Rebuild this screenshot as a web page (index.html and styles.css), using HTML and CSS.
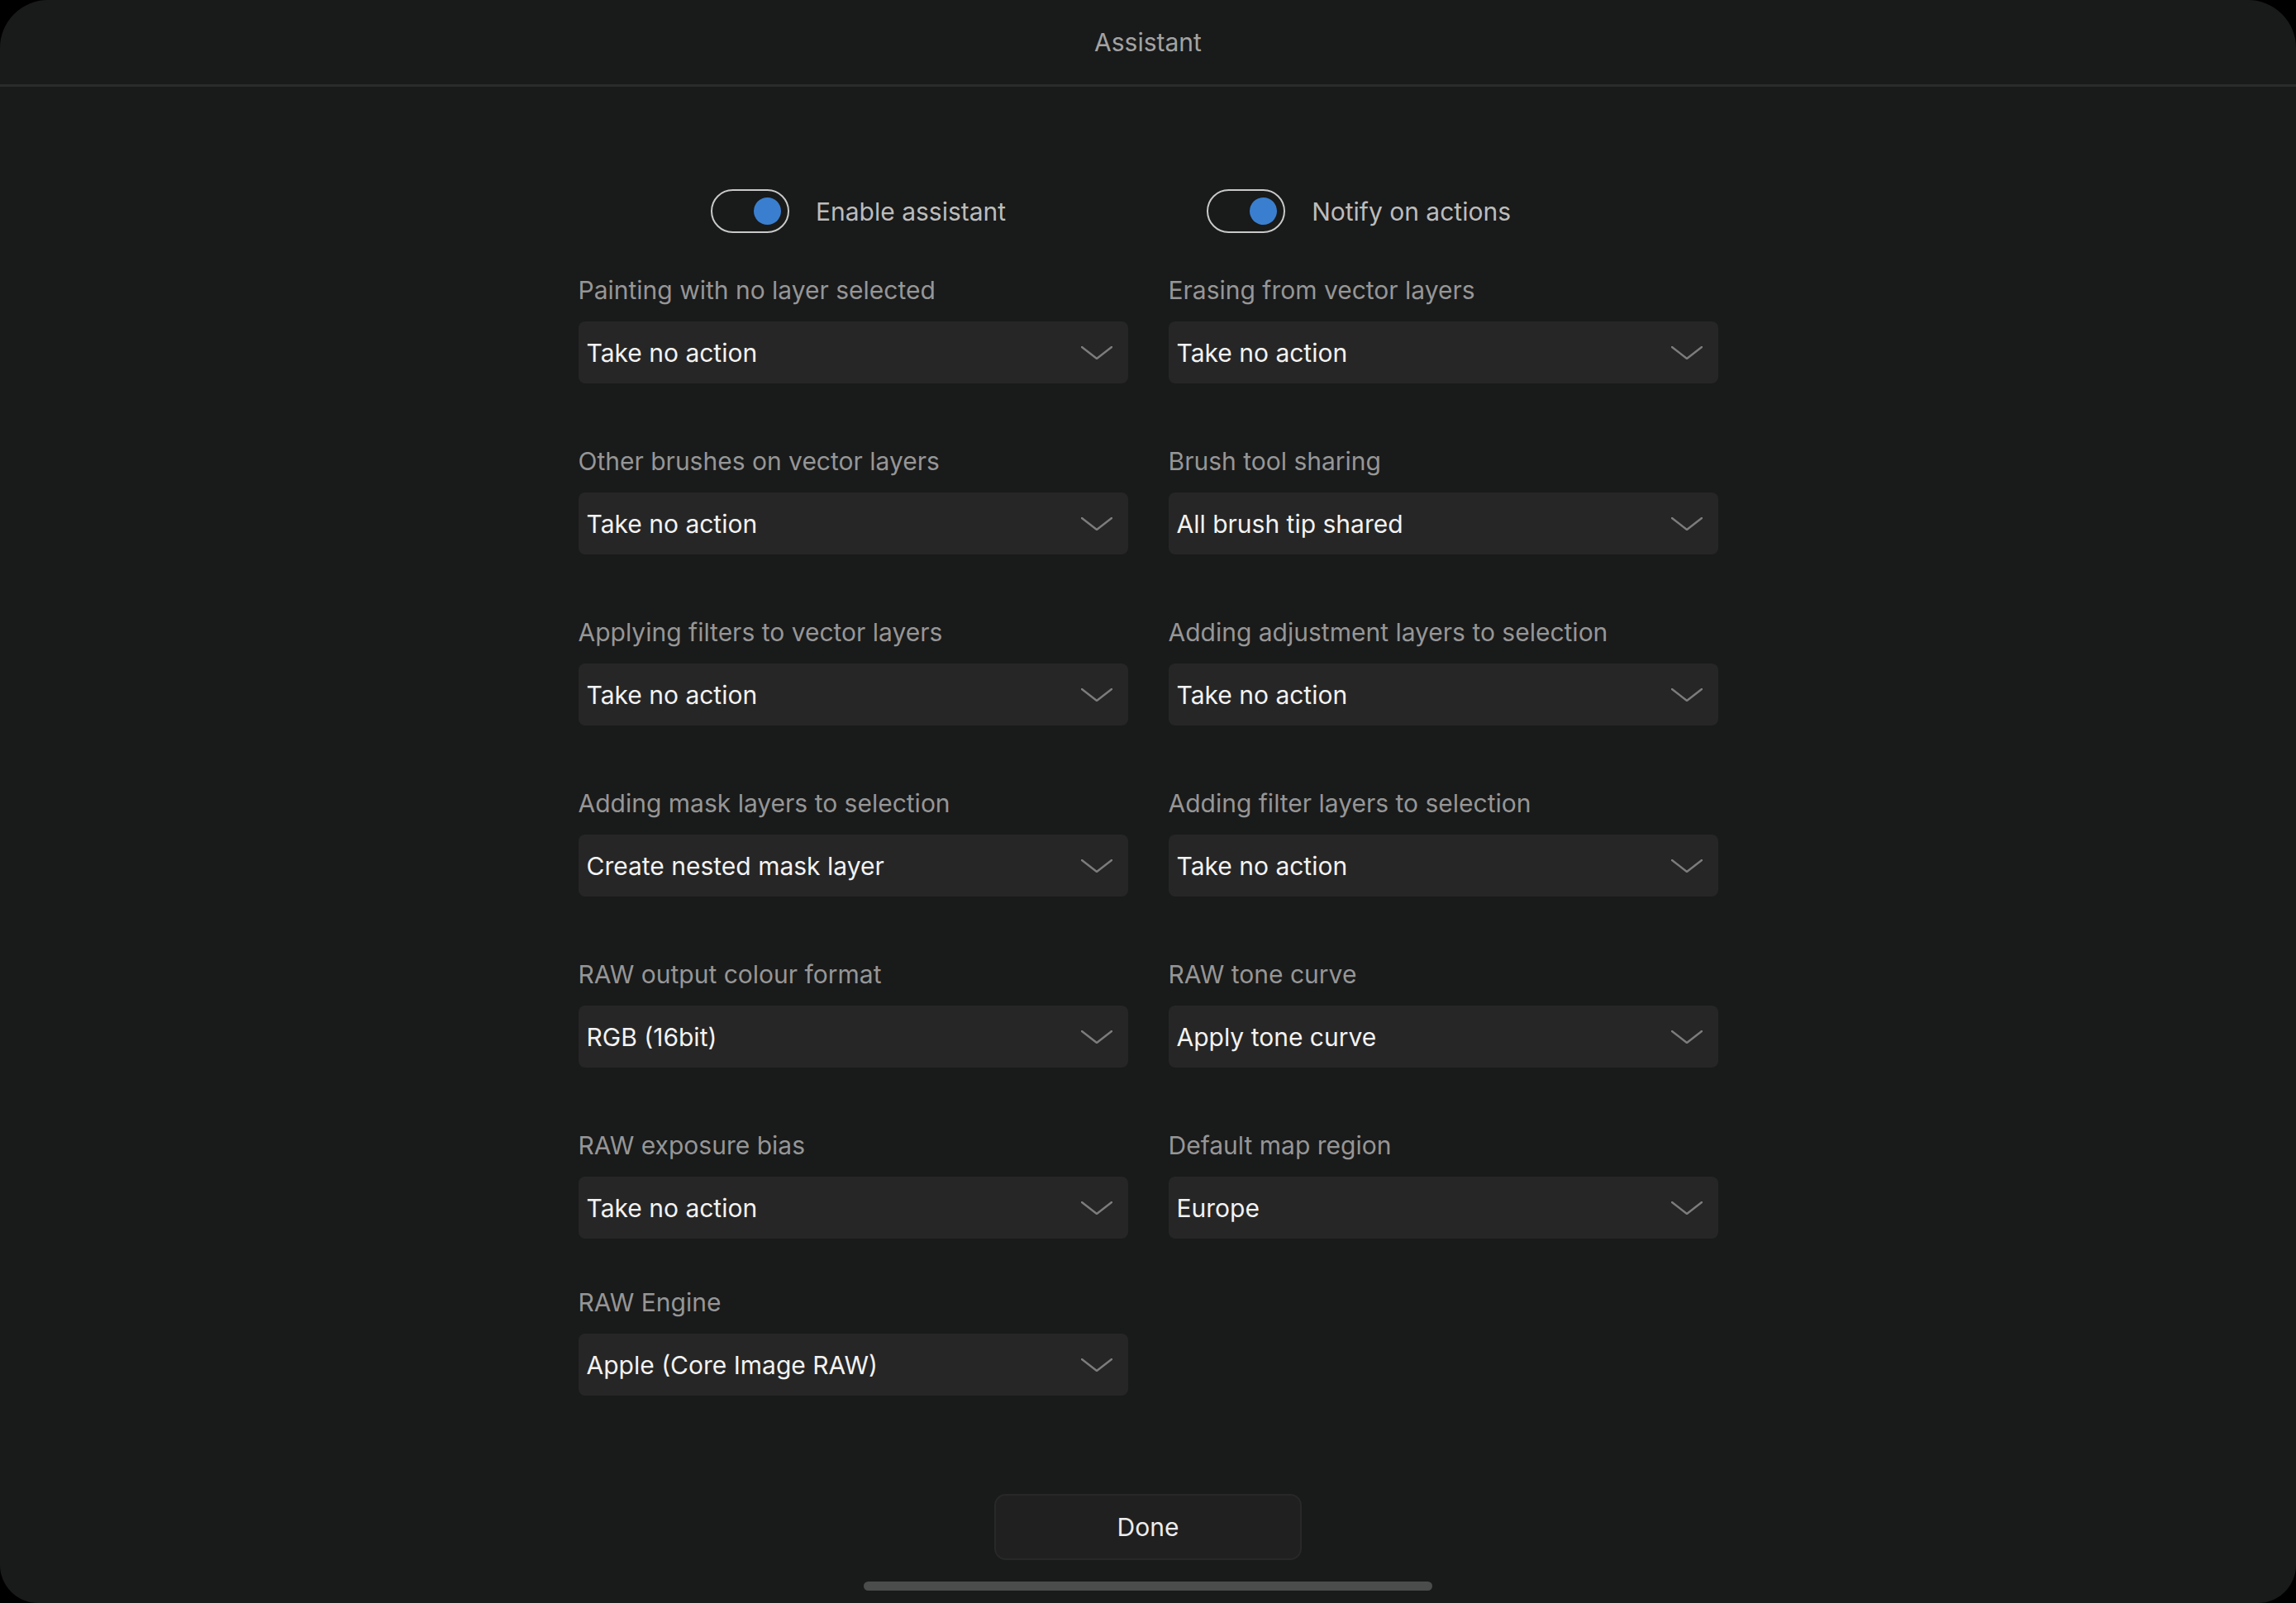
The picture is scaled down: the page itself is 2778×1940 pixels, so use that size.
FILE: index.html
```html
<!DOCTYPE html>
<html lang="en">
<head>
<meta charset="utf-8">
<title>Assistant</title>
<link rel="stylesheet" href="styles.css">
</head>
<body>
<div class="screen">
  <header class="header"><h1 class="title">Assistant</h1></header>
  <main class="content">
    <div class="toggles">
      <label class="toggle-item">
        <span class="switch"><span class="knob"></span></span>
        <span class="toggle-text">Enable assistant</span>
      </label>
      <label class="toggle-item">
        <span class="switch"><span class="knob"></span></span>
        <span class="toggle-text">Notify on actions</span>
      </label>
    </div>
    <div class="fields">
      <div class="field"><div class="field-label">Painting with no layer selected</div><div class="select"><span class="select-value">Take no action</span><svg class="chev" viewBox="0 0 38 16"><polyline points="1,1 19,15 37,1"/></svg></div></div>
      <div class="field"><div class="field-label">Erasing from vector layers</div><div class="select"><span class="select-value">Take no action</span><svg class="chev" viewBox="0 0 38 16"><polyline points="1,1 19,15 37,1"/></svg></div></div>
      <div class="field"><div class="field-label">Other brushes on vector layers</div><div class="select"><span class="select-value">Take no action</span><svg class="chev" viewBox="0 0 38 16"><polyline points="1,1 19,15 37,1"/></svg></div></div>
      <div class="field"><div class="field-label">Brush tool sharing</div><div class="select"><span class="select-value">All brush tip shared</span><svg class="chev" viewBox="0 0 38 16"><polyline points="1,1 19,15 37,1"/></svg></div></div>
      <div class="field"><div class="field-label">Applying filters to vector layers</div><div class="select"><span class="select-value">Take no action</span><svg class="chev" viewBox="0 0 38 16"><polyline points="1,1 19,15 37,1"/></svg></div></div>
      <div class="field"><div class="field-label">Adding adjustment layers to selection</div><div class="select"><span class="select-value">Take no action</span><svg class="chev" viewBox="0 0 38 16"><polyline points="1,1 19,15 37,1"/></svg></div></div>
      <div class="field"><div class="field-label">Adding mask layers to selection</div><div class="select"><span class="select-value">Create nested mask layer</span><svg class="chev" viewBox="0 0 38 16"><polyline points="1,1 19,15 37,1"/></svg></div></div>
      <div class="field"><div class="field-label">Adding filter layers to selection</div><div class="select"><span class="select-value">Take no action</span><svg class="chev" viewBox="0 0 38 16"><polyline points="1,1 19,15 37,1"/></svg></div></div>
      <div class="field"><div class="field-label">RAW output colour format</div><div class="select"><span class="select-value">RGB (16bit)</span><svg class="chev" viewBox="0 0 38 16"><polyline points="1,1 19,15 37,1"/></svg></div></div>
      <div class="field"><div class="field-label">RAW tone curve</div><div class="select"><span class="select-value">Apply tone curve</span><svg class="chev" viewBox="0 0 38 16"><polyline points="1,1 19,15 37,1"/></svg></div></div>
      <div class="field"><div class="field-label">RAW exposure bias</div><div class="select"><span class="select-value">Take no action</span><svg class="chev" viewBox="0 0 38 16"><polyline points="1,1 19,15 37,1"/></svg></div></div>
      <div class="field"><div class="field-label">Default map region</div><div class="select"><span class="select-value">Europe</span><svg class="chev" viewBox="0 0 38 16"><polyline points="1,1 19,15 37,1"/></svg></div></div>
      <div class="field field--tight"><div class="field-label">RAW Engine</div><div class="select"><span class="select-value">Apple (Core Image RAW)</span><svg class="chev" viewBox="0 0 38 16"><polyline points="1,1 19,15 37,1"/></svg></div></div>
    </div>
  </main>
  <footer class="footer">
    <button class="done-btn" type="button">Done</button>
    <div class="home-indicator"></div>
  </footer>
</div>
</body>
</html>
```
FILE: styles.css
```css
html, body {
  margin: 0;
  padding: 0;
  background: #000;
}
body {
  font-family: Inter, "Noto Sans", "Liberation Sans", sans-serif;
}
.screen {
  width: 2778px;
  height: 1940px;
  background: #191a1a;
  border-radius: 58px 58px 46px 46px;
  display: flex;
  flex-direction: column;
  overflow: hidden;
}
.header {
  height: 102px;
  border-bottom: 3px solid #2a2b2b;
  display: flex;
  align-items: center;
  justify-content: center;
  flex-shrink: 0;
}
.title {
  margin: 0;
  font-size: 30px;
  font-weight: 400;
  color: #a3a3a3;
  line-height: 36px;
}
.content {
  width: 1379px;
  margin: 0 auto;
  padding-top: 124px;
}
.toggles {
  display: flex;
  justify-content: center;
  gap: 243px;
  padding-right: 90px;
  height: 53px;
}
.toggle-item {
  display: flex;
  align-items: center;
  gap: 32px;
}
.switch {
  width: 95px;
  height: 53px;
  box-sizing: border-box;
  border: 2px solid #c9c9c9;
  border-radius: 27px;
  display: flex;
  align-items: center;
  justify-content: flex-end;
  padding-right: 8px;
}
.knob {
  width: 33px;
  height: 33px;
  border-radius: 50%;
  background: #3a7fcf;
}
.toggle-text {
  font-size: 30px;
  color: #bcbcbc;
  line-height: 36px;
}
.fields {
  margin-top: 51px;
  display: grid;
  grid-template-columns: 665px 665px;
  column-gap: 49px;
  row-gap: 76px;
}
.field--tight {
  margin-top: -17px;
}
.field-label {
  font-size: 30px;
  line-height: 36px;
  color: #969696;
  margin-bottom: 20px;
}
.select {
  height: 75px;
  background: #262626;
  border-radius: 8px;
  display: flex;
  align-items: center;
  justify-content: space-between;
  padding: 0 19px 0 10px;
}
.select-value {
  font-size: 30px;
  color: #f2f2f2;
  line-height: 36px;
}
.chev {
  width: 38px;
  height: 16px;
  fill: none;
  stroke: #7c7c7c;
  stroke-width: 2.4;
  stroke-linecap: round;
  stroke-linejoin: round;
}
.footer {
  margin-top: auto;
  display: flex;
  flex-direction: column;
  align-items: center;
  gap: 26px;
  padding-bottom: 15px;
}
.done-btn {
  width: 372px;
  height: 80px;
  background: #202020;
  border: 2px solid #282828;
  border-radius: 14px;
  color: #ececec;
  font-family: Inter, "Noto Sans", "Liberation Sans", sans-serif;
  font-size: 30px;
  padding: 0;
}
.home-indicator {
  width: 688px;
  height: 11px;
  border-radius: 6px;
  background: #4b4c4c;
}
```
